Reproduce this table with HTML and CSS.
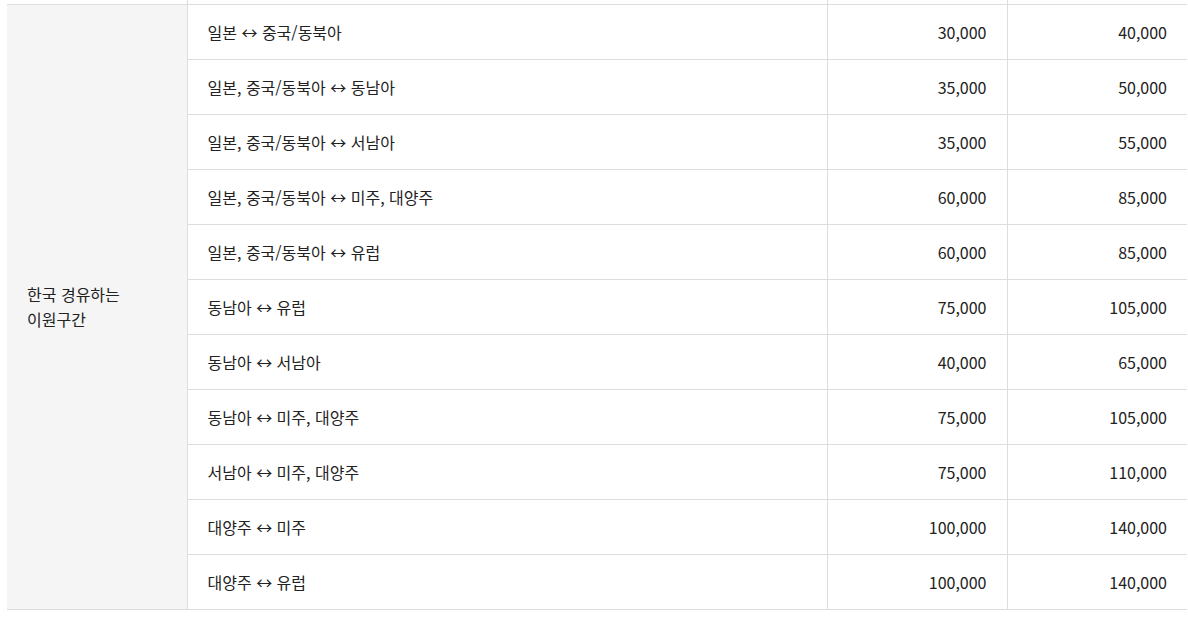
FILE: index.html
```html
<!DOCTYPE html>
<html lang="ko">
<head>
  <meta charset="UTF-8">
  <title>구간별 요금</title>
  <link rel="stylesheet" href="styles.css">
</head>
<body>
  <div class="wrapper">
    <table class="fare-table">
      <colgroup>
        <col class="col-area">
        <col class="col-route">
        <col class="col-fare">
        <col class="col-fare">
      </colgroup>
      <tbody>
        <tr class="cut-row">
          <td class="edge"></td><td></td><td></td><td></td>
        </tr>
        <tr>
          <th class="area edge" rowspan="11">한국 경유하는<br>이원구간</th>
          <td class="route">일본 ↔ 중국/동북아</td>
          <td class="num">30,000</td>
          <td class="num">40,000</td>
        </tr>
        <tr>
          <td class="route">일본, 중국/동북아 ↔ 동남아</td>
          <td class="num">35,000</td>
          <td class="num">50,000</td>
        </tr>
        <tr>
          <td class="route">일본, 중국/동북아 ↔ 서남아</td>
          <td class="num">35,000</td>
          <td class="num">55,000</td>
        </tr>
        <tr>
          <td class="route">일본, 중국/동북아 ↔ 미주, 대양주</td>
          <td class="num">60,000</td>
          <td class="num">85,000</td>
        </tr>
        <tr>
          <td class="route">일본, 중국/동북아 ↔ 유럽</td>
          <td class="num">60,000</td>
          <td class="num">85,000</td>
        </tr>
        <tr>
          <td class="route">동남아 ↔ 유럽</td>
          <td class="num">75,000</td>
          <td class="num">105,000</td>
        </tr>
        <tr>
          <td class="route">동남아 ↔ 서남아</td>
          <td class="num">40,000</td>
          <td class="num">65,000</td>
        </tr>
        <tr>
          <td class="route">동남아 ↔ 미주, 대양주</td>
          <td class="num">75,000</td>
          <td class="num">105,000</td>
        </tr>
        <tr>
          <td class="route">서남아 ↔ 미주, 대양주</td>
          <td class="num">75,000</td>
          <td class="num">110,000</td>
        </tr>
        <tr>
          <td class="route">대양주 ↔ 미주</td>
          <td class="num">100,000</td>
          <td class="num">140,000</td>
        </tr>
        <tr>
          <td class="route">대양주 ↔ 유럽</td>
          <td class="num">100,000</td>
          <td class="num">140,000</td>
        </tr>
      </tbody>
    </table>
  </div>
</body>
</html>
```

FILE: styles.css
```css
body {
  margin: 0;
  padding: 0 1px 0 7px;
  background: #fff;
  color: #222;
  font-family: "Noto Sans CJK KR", "Noto Sans", sans-serif;
  font-size: 16px;
}

.wrapper {
  width: 1180px;
}

.fare-table {
  width: 100%;
  border-collapse: collapse;
  table-layout: fixed;
}

.col-area {
  width: 180px;
}

.col-route {
  width: 640px;
}

.col-fare {
  width: 180px;
}

.fare-table th,
.fare-table td {
  border-top: 1px solid #ddd;
  border-bottom: 1px solid #ddd;
  border-left: 1px solid #ddd;
  height: 55px;
  padding: 0 20px;
  line-height: 25px;
  font-weight: normal;
  vertical-align: middle;
  box-sizing: border-box;
}

.fare-table .route,
.fare-table .num {
  padding-top: 2px;
}

.fare-table .edge {
  border-left: none;
}

.fare-table .cut-row td {
  height: 4px;
  border-top: none;
  padding: 0;
}

.area {
  background: #f5f5f5;
  text-align: left;
}

.route {
  text-align: left;
}

.num {
  text-align: right;
}
```
